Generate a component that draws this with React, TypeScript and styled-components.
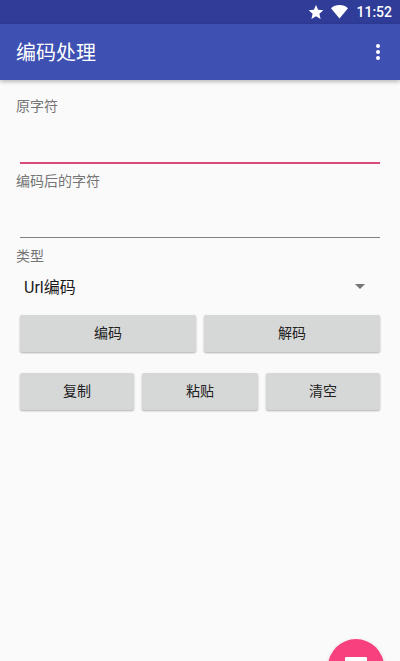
import React from 'react'
import styled, { createGlobalStyle } from 'styled-components'

const GlobalStyle = createGlobalStyle`
  html, body {
    margin: 0;
    padding: 0;
    background: #fafafa;
  }
`

const Screen = styled.div`
  position: relative;
  display: flex;
  flex-direction: column;
  width: 400px;
  height: 661px;
  overflow: hidden;
  background: #fafafa;
  font-family: Roboto, "Noto Sans CJK SC", sans-serif;
`

const StatusBar = styled.div`
  display: flex;
  align-items: center;
  justify-content: flex-end;
  height: 24px;
  padding-right: 8px;
  background: #2f3c98;
  color: #fff;
  font-size: 14px;
  font-weight: 500;
`

const StatusIcon = styled.svg`
  display: block;
  margin-right: 7px;
`

const Toolbar = styled.div`
  display: flex;
  align-items: center;
  justify-content: space-between;
  height: 56px;
  padding: 0 20px 0 16px;
  background: #3e50b2;
  box-shadow: 0 2px 4px rgba(0, 0, 0, 0.25);
  z-index: 1;
`

const Title = styled.div`
  margin-top: 2px;
  color: #fff;
  font-size: 20px;
  line-height: 56px;
`

const MenuDots = styled.div`
  display: flex;
  flex-direction: column;
  gap: 2px;
`

const Dot = styled.span`
  width: 4px;
  height: 4px;
  border-radius: 50%;
  background: #fff;
`

const Content = styled.div`
  display: flex;
  flex-direction: column;
  padding: 16px 20px 0;
`

const Label = styled.div`
  margin-left: -4px;
  color: #757575;
  font-size: 14px;
  line-height: 20px;
`

const Input = styled.div<{ $focused?: boolean }>`
  height: 46px;
  margin-bottom: 7px;
  border-bottom: ${p => (p.$focused ? '2px solid #d9497c' : '1px solid #808080')};
`

const TypeLabel = styled(Label)`
  margin-top: 2px;
  line-height: 18px;
`

const Spinner = styled.div`
  display: flex;
  align-items: center;
  justify-content: space-between;
  height: 36px;
  margin: 3px 0 11px;
  padding: 0 15px 0 4px;
  color: #1a1a1a;
  font-size: 16px;
`

const Caret = styled.span`
  width: 0;
  height: 0;
  border-left: 5px solid transparent;
  border-right: 5px solid transparent;
  border-top: 5px solid #757575;
`

const ButtonRow = styled.div<{ $columns: string }>`
  display: grid;
  grid-template-columns: ${p => p.$columns};
  gap: 8px;
  margin-bottom: 21px;
`

const Button = styled.div`
  box-sizing: border-box;
  display: flex;
  align-items: center;
  justify-content: center;
  height: 37px;
  padding-bottom: 3px;
  border-radius: 2px;
  background: #d6d7d7;
  box-shadow: 0 1px 2px rgba(0, 0, 0, 0.3);
  color: #212121;
  font-size: 14px;
`

const Fab = styled.div`
  position: absolute;
  left: 328px;
  top: 639px;
  width: 56px;
  height: 56px;
  border-radius: 50%;
  background: #f8407f;
  box-shadow: 0 2px 5px rgba(0, 0, 0, 0.15);
`

const FabIcon = styled.div`
  width: 22px;
  height: 8px;
  margin: 18px auto 0;
  background: #fff;
  border-radius: 1px;
`

const App = () => {
  return (
    <Screen>
      <GlobalStyle />
      <StatusBar>
        <StatusIcon width="16" height="16" viewBox="0 0 24 24" fill="#fff">
          <path d="M12 1.500l3.200 7.200 7.800.8-5.900 5.200 1.800 7.800L12 18.400l-6.900 4.100 1.800-7.800L1 9.500l7.800-.8z" />
        </StatusIcon>
        <StatusIcon width="18" height="14" viewBox="0 0 18 14" fill="#fff">
          <path d="M8.500 13.500L0 3.200C2.300 1.200 5.200 0 8.500 0s6.200 1.200 8.500 3.200z" />
        </StatusIcon>
        11:52
      </StatusBar>
      <Toolbar>
        <Title>编码处理</Title>
        <MenuDots>
          <Dot />
          <Dot />
          <Dot />
        </MenuDots>
      </Toolbar>
      <Content>
        <Label>原字符</Label>
        <Input $focused />
        <Label>编码后的字符</Label>
        <Input />
        <TypeLabel>类型</TypeLabel>
        <Spinner>
          Url编码
          <Caret />
        </Spinner>
        <ButtonRow $columns="1fr 1fr">
          <Button>编码</Button>
          <Button>解码</Button>
        </ButtonRow>
        <ButtonRow $columns="114px 116px 114px">
          <Button>复制</Button>
          <Button>粘贴</Button>
          <Button>清空</Button>
        </ButtonRow>
      </Content>
      <Fab>
        <FabIcon />
      </Fab>
    </Screen>
  )
}

export default App
